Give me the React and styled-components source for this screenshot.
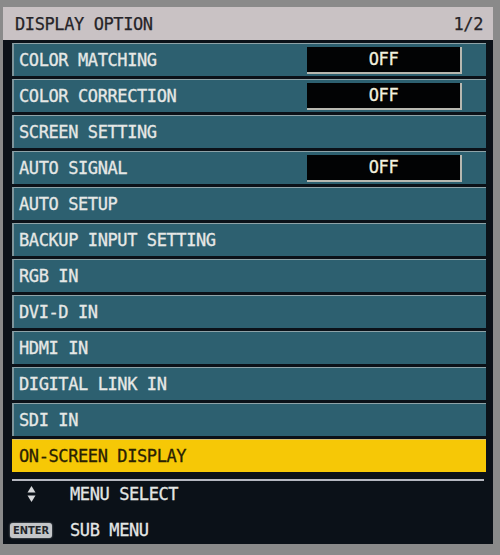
import React from "react";
import styled, { createGlobalStyle } from "styled-components";

const Global = createGlobalStyle`
  html, body { margin: 0; padding: 0; background: #8a8a8a; }
  body { width: 500px; height: 555px; overflow: hidden; }
`;

const FONT = `"DejaVu Sans Mono", "Liberation Mono", monospace`;

const Screen = styled.div`
  margin: 7px 0 0 3px;
  width: 490px;
  display: flex;
  flex-direction: column;
`;

const Header = styled.div`
  height: 33px;
  background: #c9c2c4;
  display: flex;
  align-items: center;
  justify-content: space-between;
  padding: 0 10px 0 12px;
  font-family: ${FONT};
  font-size: 17px;
  letter-spacing: -0.4px;
  color: #262428;
  -webkit-text-stroke: 0.25px #262428;
`;

const Panel = styled.div`
  background: #0b1118;
  padding: 3px 7px 0 9px;
  height: 504px;
  box-sizing: border-box;
  display: flex;
  flex-direction: column;
`;

const List = styled.div`
  display: flex;
  flex-direction: column;
  gap: 3px;
`;

const Row = styled.div`
  height: 33px;
  box-sizing: border-box;
  display: flex;
  align-items: center;
  justify-content: space-between;
  padding: 0 24px 0 5px;
  background: ${(p) => (p.$active ? "#f6c806" : "#2d6070")};
  border-top: 1px solid ${(p) => (p.$active ? "#d8c070" : "#8ea3a8")};
  border-left: 2px solid ${(p) => (p.$active ? "#f6c806" : "#7d949a")};
  font-family: ${FONT};
  font-size: 17px;
  letter-spacing: -0.4px;
  color: ${(p) => (p.$active ? "#2a2104" : "#e6e8e6")};
  -webkit-text-stroke: 0.3px ${(p) => (p.$active ? "#2a2104" : "#e6e8e6")};
`;

const Value = styled.div`
  width: 155px;
  height: 27px;
  box-sizing: border-box;
  background: #020304;
  border-right: 2px solid #b8b8b0;
  border-bottom: 2px solid #b8b8b0;
  display: flex;
  align-items: center;
  justify-content: center;
  color: #f2f0de;
  -webkit-text-stroke: 0.3px #f2f0de;
`;

const Divider = styled.div`
  height: 2px;
  background: #b6b8c0;
  margin: 7px 2px 0 0;
`;

const Footer = styled.div`
  display: flex;
  flex-direction: column;
  gap: 14px;
  padding-top: 2px;
`;

const Hint = styled.div`
  height: 22px;
  display: flex;
  align-items: center;
  font-family: ${FONT};
  font-size: 17px;
  letter-spacing: -0.4px;
  color: #e4e6e4;
  -webkit-text-stroke: 0.3px #e4e6e4;
`;

const IconSlot = styled.div`
  width: 60px;
  margin-left: -2px;
  box-sizing: border-box;
  display: flex;
  align-items: center;
  justify-content: ${(p) => (p.$center ? "center" : "flex-start")};
  padding-right: ${(p) => (p.$center ? "18px" : "0")};
`;

const EnterBadge = styled.div`
  background: #c4c6c8;
  color: #23262a;
  -webkit-text-stroke: 0;
  border-radius: 3px;
  font-family: "DejaVu Sans Condensed", "DejaVu Sans", sans-serif;
  font-weight: bold;
  font-size: 11px;
  letter-spacing: 0;
  padding: 1px 3px;
  line-height: 13px;
  box-shadow: 0 0 2px #9aa0a4;
`;

const rows = [
  ["COLOR MATCHING", "OFF"],
  ["COLOR CORRECTION", "OFF"],
  ["SCREEN SETTING"],
  ["AUTO SIGNAL", "OFF"],
  ["AUTO SETUP"],
  ["BACKUP INPUT SETTING"],
  ["RGB IN"],
  ["DVI-D IN"],
  ["HDMI IN"],
  ["DIGITAL LINK IN"],
  ["SDI IN"],
  ["ON-SCREEN DISPLAY", null, true],
];

export default function App() {
  return (
    <>
      <Global />
      <Screen>
        <Header>
          <span>DISPLAY OPTION</span>
          <span>1/2</span>
        </Header>
        <Panel>
          <List>
            {rows.map(([label, value, active]) => (
              <Row key={label} $active={active}>
                <span>{label}</span>
                {value && <Value>{value}</Value>}
              </Row>
            ))}
          </List>
          <Divider />
          <Footer>
            <Hint>
              <IconSlot $center>
                <svg width="9" height="18" viewBox="0 0 9 18">
                  <polygon points="4.5,1 8.5,7.5 0.5,7.5" fill="#d8dadc" />
                  <polygon points="0.5,10.5 8.5,10.5 4.5,17" fill="#d8dadc" />
                </svg>
              </IconSlot>
              <span>MENU SELECT</span>
            </Hint>
            <Hint>
              <IconSlot>
                <EnterBadge>ENTER</EnterBadge>
              </IconSlot>
              <span>SUB MENU</span>
            </Hint>
          </Footer>
        </Panel>
      </Screen>
    </>
  );
}
